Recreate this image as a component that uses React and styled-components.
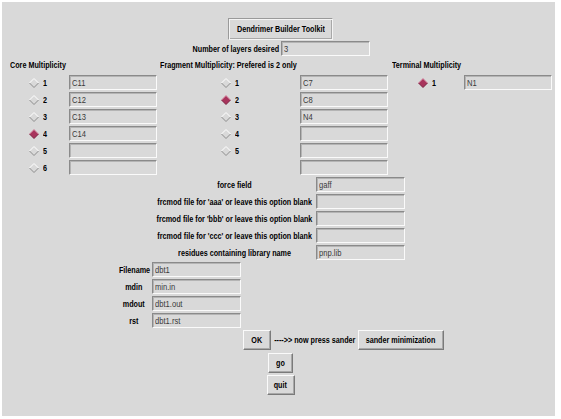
import React from "react";
import styled, { createGlobalStyle } from "styled-components";

const FONT = `"Liberation Sans", Arial, sans-serif`;

const GlobalStyle = createGlobalStyle`
  html, body {
    margin: 0;
    padding: 0;
    background: #ffffff;
  }
  body {
    font-family: ${FONT};
    font-size: 9px;
    color: #000;
  }
`;

const core = [
  { n: 1, value: "C11" },
  { n: 2, value: "C12" },
  { n: 3, value: "C13" },
  { n: 4, value: "C14", on: true },
  { n: 5, value: "" },
  { n: 6, value: "" },
];

const fragment = [
  { n: 1, value: "C7" },
  { n: 2, value: "C8", on: true },
  { n: 3, value: "N4" },
  { n: 4, value: "" },
  { n: 5, value: "" },
  { n: null, value: "" },
];

const terminal = [{ n: 1, value: "N1", on: true }];

const options = [
  { label: "force field", value: "gaff" },
  { label: "frcmod file for 'aaa' or leave this option blank", value: "" },
  { label: "frcmod file for 'bbb' or leave this option blank", value: "" },
  { label: "frcmod file for 'ccc' or leave this option blank", value: "" },
  { label: "residues containing library name", value: "pnp.lib" },
];

const files = [
  { label: "Filename", value: "dbt1" },
  { label: "mdin", value: "min.in" },
  { label: "mdout", value: "dbt1.out" },
  { label: "rst", value: "dbt1.rst" },
];

// tk style radio indicator
const Diamond = ({ on }) => (
  <svg width="10" height="10" viewBox="0 0 10 10">
    <polygon
      points="5,0.5 9.5,5 5,9.5 0.5,5"
      fill={on ? "#a8345c" : "#d9d9d9"}
    />
    <polyline
      points="0.5,5 5,0.5 9.5,5"
      fill="none"
      stroke={on ? "#d890a8" : "#ffffff"}
    />
    <polyline
      points="0.5,5 5,9.5 9.5,5"
      fill="none"
      stroke={on ? "#7a2040" : "#8c8c8c"}
    />
  </svg>
);

const MultiColumn = ({ title, rows, cell, offset }) => (
  <Column>
    <Header>
      <Txt origin="left">{title}</Txt>
    </Header>
    {rows.map((r, i) => (
      <MultiRow key={`row_${i}`} cell={cell}>
        <RadioCell offset={offset}>
          {r.n !== null && (
            <>
              <Diamond on={r.on} />
              <Num>
                <Txt origin="left">{r.n}</Txt>
              </Num>
            </>
          )}
        </RadioCell>
        <Entry>
          <Txt origin="left">{r.value}</Txt>
        </Entry>
      </MultiRow>
    ))}
  </Column>
);

const App = () => {
  return (
    <>
      <GlobalStyle />
      <Panel>
        <Centered>
          <TitleLabel>
            <Txt>Dendrimer Builder Toolkit</Txt>
          </TitleLabel>
          <LayerRow>
            <LayerLabel>
              <Txt origin="right">Number of layers desired</Txt>
            </LayerLabel>
            <Entry width={89}>
              <Txt origin="left">3</Txt>
            </Entry>
          </LayerRow>
        </Centered>

        <MultiGrid>
          <MultiColumn title="Core Multiplicity" rows={core} cell={59} offset={19} />
          <MultiColumn
            title="Fragment Multiplicity: Prefered is 2 only"
            rows={fragment}
            cell={140}
            offset={61}
          />
          <MultiColumn title="Terminal Multiplicity" rows={terminal} cell={72} offset={26} />
        </MultiGrid>

        <FormSection left={153}>
          {options.map((o, i) => (
            <FormRow key={`opt_${i}`} labelWidth={159} gap={2} entryWidth={89}>
              <FormLabel>
                <Txt>{o.label}</Txt>
              </FormLabel>
              <Entry>
                <Txt origin="left">{o.value}</Txt>
              </Entry>
            </FormRow>
          ))}
        </FormSection>

        <FormSection left={115}>
          {files.map((f, i) => (
            <FormRow key={`file_${i}`} labelWidth={34} gap={1} entryWidth={89}>
              <FormLabel>
                <Txt>{f.label}</Txt>
              </FormLabel>
              <Entry>
                <Txt origin="left">{f.value}</Txt>
              </Entry>
            </FormRow>
          ))}
        </FormSection>

        <ActionRow>
          <Button width={28}>
            <Txt>OK</Txt>
          </Button>
          <Hint>
            <Txt>----&gt;&gt; now press sander</Txt>
          </Hint>
          <Button width={86}>
            <Txt>sander minimization</Txt>
          </Button>
        </ActionRow>

        <ButtonStack>
          <Button width={25}>
            <Txt>go</Txt>
          </Button>
          <Button width={28}>
            <Txt>quit</Txt>
          </Button>
        </ButtonStack>
      </Panel>
    </>
  );
};

export default App;

const Panel = styled.div`
  margin: 2px;
  width: 553px;
  height: 414px;
  box-sizing: border-box;
  padding-top: 16px;
  background: #d9d9d9;
  display: flex;
  flex-direction: column;
`;

// the toolkit font is narrow: squeeze each text run horizontally
const Txt = styled.span`
  display: inline-block;
  white-space: nowrap;
  transform: scaleX(0.8);
  transform-origin: ${({ origin }) => origin || "center"} center;
`;

const Centered = styled.div`
  display: flex;
  flex-direction: column;
  align-items: center;
  padding-left: 4px;
`;

const TitleLabel = styled.div`
  box-sizing: border-box;
  width: 105px;
  height: 22px;
  display: flex;
  align-items: center;
  justify-content: center;
  font-weight: bold;
  border: 1px solid;
  border-color: #9a9a9a #f4f4f4 #f4f4f4 #9a9a9a;
  box-shadow: inset 1px 1px 0 #f4f4f4, inset -1px -1px 0 #a8a8a8;
`;

const LayerRow = styled.div`
  margin-top: 1px;
  display: flex;
  align-items: center;
  gap: 2px;
`;

const LayerLabel = styled.div`
  width: 88px;
  display: flex;
  justify-content: flex-end;
  font-weight: bold;
`;

const Entry = styled.div`
  box-sizing: border-box;
  width: ${({ width }) => (width ? `${width}px` : "auto")};
  height: 15px;
  padding-left: 2px;
  display: flex;
  align-items: center;
  color: #3a3a3a;
  font-size: 9.5px;
  overflow: hidden;
  border: 1px solid;
  border-color: #8a8a8a #fafafa #fafafa #8a8a8a;
  box-shadow: inset 1px 1px 0 #b4b4b4;
`;

const MultiGrid = styled.div`
  margin-top: 1px;
  padding-left: 8px;
  display: grid;
  grid-template-columns: 150px 232px 1fr;
  align-items: start;
`;

const Column = styled.div`
  display: flex;
  flex-direction: column;
  gap: 2px;
`;

const Header = styled.div`
  height: 16px;
  display: flex;
  align-items: center;
  font-weight: bold;
`;

const MultiRow = styled.div`
  display: grid;
  grid-template-columns: ${({ cell }) => cell}px 88px;
  height: 15px;
`;

const RadioCell = styled.div`
  display: flex;
  align-items: center;
  gap: 4px;
  padding-left: ${({ offset }) => offset}px;
`;

const Num = styled.span`
  font-weight: bold;
`;

const FormSection = styled.div`
  margin-top: 2px;
  padding-left: ${({ left }) => left}px;
  display: flex;
  flex-direction: column;
  gap: 2px;
`;

const FormRow = styled.div`
  display: grid;
  grid-template-columns: ${({ labelWidth }) => labelWidth}px ${({ entryWidth }) => entryWidth}px;
  column-gap: ${({ gap }) => gap}px;
  height: 15px;
`;

const FormLabel = styled.div`
  display: flex;
  align-items: center;
  justify-content: center;
  font-weight: bold;
`;

const ActionRow = styled.div`
  margin-top: 2px;
  padding-left: 241px;
  display: flex;
  align-items: center;
  gap: 2px;
`;

const Hint = styled.div`
  width: 83px;
  display: flex;
  justify-content: center;
  font-weight: bold;
`;

const Button = styled.div`
  box-sizing: border-box;
  width: ${({ width }) => width}px;
  height: 20px;
  display: flex;
  align-items: center;
  justify-content: center;
  font-weight: bold;
  background: #d9d9d9;
  border: 1px solid;
  border-color: #fafafa #7a7a7a #7a7a7a #fafafa;
  box-shadow: inset -1px -1px 0 #a8a8a8;
`;

const ButtonStack = styled.div`
  margin-top: 3px;
  padding-left: 4px;
  display: flex;
  flex-direction: column;
  align-items: center;
  gap: 2px;
`;
